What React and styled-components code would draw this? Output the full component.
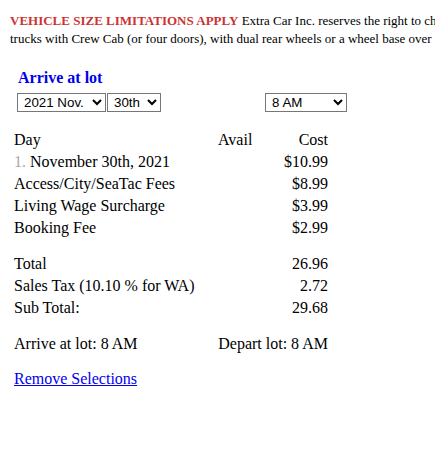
import React from 'react';
import styled, { createGlobalStyle } from 'styled-components';

const GlobalStyle = createGlobalStyle`
  body {
    margin: 0;
    background: #fff;
    font-family: "Liberation Serif", "Times New Roman", serif;
    color: #000;
    overflow-x: hidden;
  }
`;

const Page = styled.div`
  width: 435px;
  overflow: hidden;
`;

const Notice = styled.div`
  padding: 12px 0 0 10px;
  font-size: 13px;
  line-height: 18px;
  white-space: nowrap;
`;

const Warn = styled.b`
  color: #cc3333;
`;

const Booking = styled.div`
  padding: 0 14px;
`;

const Heading = styled.h3`
  margin: 21px 0 6px 4px;
  font-size: 16px;
  font-weight: bold;
  color: #0000ee;
`;

const Pickers = styled.div`
  display: flex;
  align-items: center;
  padding-left: 3px;
`;

const Select = styled.select`
  font-family: "Liberation Sans", Arial, sans-serif;
  font-size: 13.333px;
  height: 19px;
  width: ${p => p.w}px;
  margin-left: ${p => p.gap || 0}px;
  border: 1px solid #767676;
  border-radius: 0;
  background: #fff;
  color: #000;
  padding: 0 0 0 2px;
`;

const Grid = styled.div`
  display: grid;
  grid-template-columns: 204px 40px 70px;
  grid-auto-rows: 22px;
  align-items: center;
  margin-top: ${p => p.top}px;
  font-size: 16px;
`;

const Cell = styled.div`
  grid-column: ${p => p.span || 'auto'};
  text-align: ${p => (p.right ? 'right' : 'left')};
  white-space: nowrap;
`;

const Num = styled.span`
  color: #aaa;
`;

const Link = styled.a`
  display: block;
  margin-top: 15px;
  font-size: 16px;
  color: #0000ee;
  text-decoration: underline;
`;

const fees = [
  ['Access/City/SeaTac Fees', '$8.99'],
  ['Living Wage Surcharge', '$3.99'],
  ['Booking Fee', '$2.99'],
];

const totals = [
  ['Total', '26.96'],
  ['Sales Tax (10.10 % for WA)', '2.72'],
  ['Sub Total:', '29.68'],
];

export default function App() {
  return (
    <Page>
      <GlobalStyle />
      <Notice>
        <div>
          <Warn>VEHICLE SIZE LIMITATIONS APPLY</Warn> Extra Car Inc. reserves the right to charge extra for
        </div>
        <div>trucks with Crew Cab (or four doors), with dual rear wheels or a wheel base over 140 inches.</div>
      </Notice>
      <Booking>
        <Heading>Arrive at lot</Heading>
        <Pickers>
          <Select w={89} defaultValue="2021-11">
            <option value="2021-11">2021 Nov.</option>
            <option value="2021-12">2021 Dec.</option>
          </Select>
          <Select w={54} gap={1} defaultValue="30">
            <option value="29">29th</option>
            <option value="30">30th</option>
          </Select>
          <Select w={82} gap={104} defaultValue="8">
            <option value="7">7 AM</option>
            <option value="8">8 AM</option>
            <option value="9">9 AM</option>
          </Select>
        </Pickers>
        <Grid top={17}>
          <Cell>Day</Cell>
          <Cell>Avail</Cell>
          <Cell right>Cost</Cell>
          <Cell span="1 / 3"><Num>1.</Num> November 30th, 2021</Cell>
          <Cell right>$10.99</Cell>
          {fees.map(([label, cost]) => (
            <React.Fragment key={label}>
              <Cell span="1 / 3">{label}</Cell>
              <Cell right>{cost}</Cell>
            </React.Fragment>
          ))}
        </Grid>
        <Grid top={14}>
          {totals.map(([label, val]) => (
            <React.Fragment key={label}>
              <Cell span="1 / 3">{label}</Cell>
              <Cell right>{val}</Cell>
            </React.Fragment>
          ))}
        </Grid>
        <Grid top={14}>
          <Cell>Arrive at lot: 8 AM</Cell>
          <Cell span="2 / 4" right>Depart lot: 8 AM</Cell>
        </Grid>
        <Link href="#">Remove Selections</Link>
      </Booking>
    </Page>
  );
}
